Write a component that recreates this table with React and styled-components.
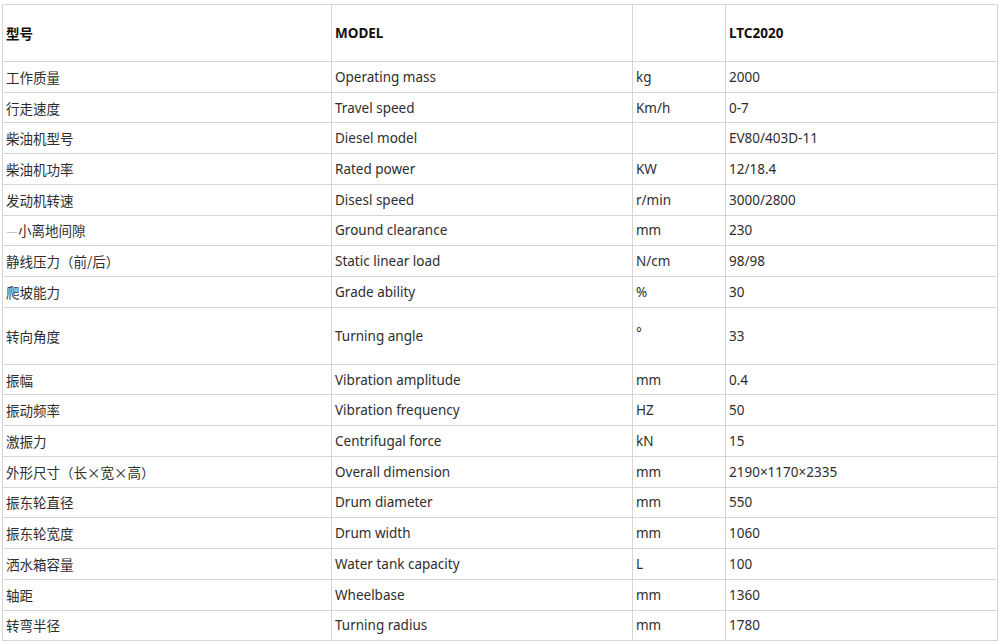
import React from 'react';
import styled, { createGlobalStyle } from 'styled-components';

const GlobalStyle = createGlobalStyle`
  body {
    margin: 0;
    background: #ffffff;
    font-family: "Noto Sans", "Noto Sans CJK SC", sans-serif;
  }
`;

const Page = styled.div`
  padding: 4px 0 0 2px;
`;

const Table = styled.table`
  width: 995px;
  border-collapse: collapse;
  table-layout: fixed;
  font-size: 13.5px;
  color: #333333;
`;

const Row = styled.tr`
  height: ${(p) => (p.tall ? '57px' : '30.72px')};
`;

const Cell = styled.td`
  border: 1px solid #d6d6d6;
  padding: 0 0 0 3px;
  vertical-align: middle;
  white-space: nowrap;
  font-weight: ${(p) => (p.bold ? 700 : 400)};
  color: ${(p) => (p.bold ? '#111111' : '#2e2e2e')};
  font-family: ${(p) =>
    p.cjk ? '"Noto Sans CJK SC", sans-serif' : '"Noto Sans", "Noto Sans CJK SC", sans-serif'};
`;

const Faint = styled.span`
  color: #b8b8b8;
`;

const Degree = styled.span`
  position: relative;
  top: -3px;
`;

const rows = [
  ['工作质量', 'Operating mass', 'kg', '2000'],
  ['行走速度', 'Travel speed', 'Km/h', '0-7'],
  ['柴油机型号', 'Diesel model', '', 'EV80/403D-11'],
  ['柴油机功率', 'Rated power', 'KW', '12/18.4'],
  ['发动机转速', 'Disesl speed', 'r/min', '3000/2800'],
  ['gap', 'Ground clearance', 'mm', '230'],
  ['静线压力（前/后）', 'Static linear load', 'N/cm', '98/98'],
  ['爬坡能力', 'Grade ability', '%', '30'],
  ['转向角度', 'Turning angle', 'deg', '33', true],
  ['振幅', 'Vibration amplitude', 'mm', '0.4'],
  ['振动频率', 'Vibration frequency', 'HZ', '50'],
  ['激振力', 'Centrifugal force', 'kN', '15'],
  ['外形尺寸（长×宽×高）', 'Overall dimension', 'mm', '2190×1170×2335'],
  ['振东轮直径', 'Drum diameter', 'mm', '550'],
  ['振东轮宽度', 'Drum width', 'mm', '1060'],
  ['洒水箱容量', 'Water tank capacity', 'L', '100'],
  ['轴距', 'Wheelbase', 'mm', '1360'],
  ['转弯半径', 'Turning radius', 'mm', '1780'],
];

export default function App() {
  return (
    <Page>
      <GlobalStyle />
      <Table>
        <colgroup>
          <col style={{ width: '329px' }} />
          <col style={{ width: '301px' }} />
          <col style={{ width: '93px' }} />
          <col style={{ width: '272px' }} />
        </colgroup>
        <tbody>
          <Row tall>
            <Cell bold cjk>型号</Cell>
            <Cell bold>MODEL</Cell>
            <Cell />
            <Cell bold>LTC2020</Cell>
          </Row>
          {rows.map(([zh, en, unit, value, tall]) => (
            <Row key={en} tall={tall}>
              <Cell cjk>
                {zh === 'gap' ? (
                  <>
                    <Faint>—</Faint>小离地间隙
                  </>
                ) : (
                  zh
                )}
              </Cell>
              <Cell>{en}</Cell>
              <Cell>{unit === 'deg' ? <Degree>°</Degree> : unit}</Cell>
              <Cell>{value}</Cell>
            </Row>
          ))}
        </tbody>
      </Table>
    </Page>
  );
}
